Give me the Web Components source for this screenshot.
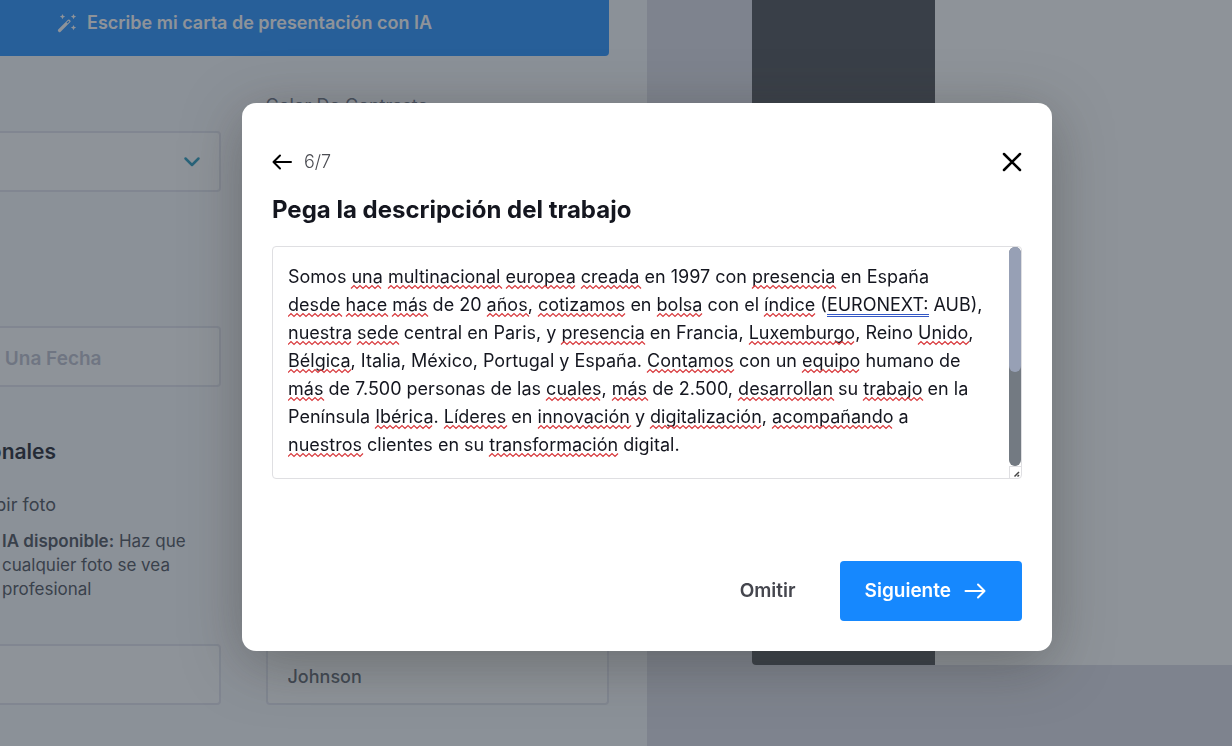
<!DOCTYPE html>
<html lang="es">
<head>
<meta charset="utf-8">
<title>Carta de presentación</title>
<style>
  html, body { margin: 0; height: 100%; }
  body { font-family: Inter, "Open Sans", sans-serif; color: #14161f; overflow: hidden; }
</style>
</head>
<body>
<letter-editor></letter-editor>
<step-dialog step="6/7" heading="Pega la descripción del trabajo">
  <spell-textarea label="Pega la descripción del trabajo"></spell-textarea>
</step-dialog>

<script>
class FormField extends HTMLElement {
  connectedCallback() {
    const type = this.getAttribute('type') || 'text';
    const label = this.getAttribute('label') || '';
    const control = type === 'select'
      ? `<select id="control"><option></option></select>
         <svg viewBox="0 0 18 12" width="18" height="12"><path d="M2.500 2.500l6.500 6.500 6.500-6.500"/></svg>`
      : `<input id="control" value="${this.getAttribute('value') || ''}" placeholder="${this.getAttribute('placeholder') || ''}">`;
    this.attachShadow({ mode: 'open' });
    this.shadowRoot.innerHTML = `
      <style>
        :host { display: block; }
        label { display: block; height: 24px; margin-bottom: 13px; font-size: 18px; line-height: 24px; color: #5e6577; }
        .box { display: grid; align-items: center; }
        input, select {
          grid-area: 1 / 1;
          box-sizing: border-box;
          width: 100%;
          height: 61px;
          padding: 4px 20px 0;
          border: 2px solid #e1e2ec;
          border-radius: 4px;
          background: #fff;
          color: #4f555f;
          font: 500 18px/24px Inter, "Open Sans", sans-serif;
          appearance: none;
        }
        input::placeholder { color: #b9bccb; font-size: 19px; font-weight: 600; opacity: 1; }
        svg { grid-area: 1 / 1; justify-self: end; margin-right: 20px; fill: none; stroke: #1a94b8; stroke-width: 2.5; stroke-linecap: round; stroke-linejoin: round; }
      </style>
      <label for="control">${label}</label>
      <div class="box">${control}</div>
    `;
  }
}
customElements.define('form-field', FormField);

class PhotoUpload extends HTMLElement {
  connectedCallback() {
    this.attachShadow({ mode: 'open' });
    this.shadowRoot.innerHTML = `
      <style>
        :host { display: block; color: #3f444f; }
        .title { width: 179px; margin: 0; font-size: 18px; line-height: 26px; text-align: right; }
        .note { width: 190px; margin: 11px 0 0 125px; font-size: 17px; line-height: 24px; }
        b { font-weight: 600; }
      </style>
      <p class="title">Subir foto</p>
      <p class="note"><b>IA disponible:</b> Haz que cualquier foto se vea profesional</p>
    `;
  }
}
customElements.define('photo-upload', PhotoUpload);

class LetterEditor extends HTMLElement {
  connectedCallback() {
    this.attachShadow({ mode: 'open' });
    this.shadowRoot.innerHTML = `
      <style>
        :host { display: flex; height: 100vh; overflow: hidden; background: #dbdbe5; }
        .form {
          box-sizing: border-box;
          flex: 0 0 53%;
          max-width: 647px;
          padding-right: 38px;
          overflow: hidden;
          background: #f9fafd;
        }
        /* the form runs past the left edge of the window */
        .content { margin-left: -123px; }
        .ai {
          display: flex;
          align-items: center;
          gap: 10px;
          width: 100%;
          height: 66px;
          margin: -10px 0 0;
          padding: 0 0 0 180px;
          border: 0;
          border-radius: 4px;
          background: #1688fe;
          color: #fff;
          font: 600 18px/24px Inter, "Open Sans", sans-serif;
        }
        .row { display: grid; grid-template-columns: 1fr 1fr; gap: 45px; }
        .first { margin-top: 38px; }
        .second { margin-top: 97px; }
        h2 { width: 179px; margin: 49px 0 0; font-size: 21px; font-weight: 600; line-height: 32px; text-align: right; color: #10141f; }
        photo-upload { margin-top: 24px; }
        .third { margin-top: 6px; }
        .preview { flex: 1; padding-left: 105px; overflow: hidden; }
        .sheet { display: flex; height: 665px; background: #fff; border-radius: 0 0 0 4px; overflow: hidden; }
        .side { width: 183px; background: #3f4147; }
      </style>
      <section class="form">
        <div class="content">
          <button class="ai" type="button">
            <svg viewBox="0 0 20 20" width="20" height="20" fill="#fff">
              <path d="M1.2 16.6L11 6.8a1.1 1.1 0 0 1 1.6 0l.7.7a1.1 1.1 0 0 1 0 1.6L3.4 18.9a1.2 1.2 0 0 1-1.7 0l-.5-.6a1.2 1.2 0 0 1 0-1.7z"/>
              <path d="M9.6 9.6l1.9-1.9.9.9-1.9 1.9z" fill="#1688fe"/>
              <path d="M5.500 1l.8 1.8 1.8.8-1.8.8-.8 1.8-.8-1.8-1.8-.8 1.8-.8zM16.500 1l.8 1.8 1.8.8-1.8.8-.8 1.8-.8-1.8-1.8-.8 1.8-.8zM16.500 12l.8 1.8 1.8.8-1.8.8-.8 1.8-.8-1.8-1.8-.8 1.8-.8z"/>
            </svg>
            Escribe mi carta de presentación con IA
          </button>
          <div class="row first">
            <form-field type="select"></form-field>
            <form-field type="select" label="Color De Contraste"></form-field>
          </div>
          <div class="row second">
            <form-field placeholder="Selecciona Una Fecha"></form-field>
            <form-field></form-field>
          </div>
          <h2>Personales</h2>
          <photo-upload></photo-upload>
          <div class="row third">
            <form-field></form-field>
            <form-field value="Johnson"></form-field>
          </div>
        </div>
      </section>
      <section class="preview">
        <div class="sheet"><div class="side"></div></div>
      </section>
    `;
  }
}
customElements.define('letter-editor', LetterEditor);

class StepDialog extends HTMLElement {
  connectedCallback() {
    this.attachShadow({ mode: 'open' });
    this.shadowRoot.innerHTML = `
      <style>
        :host {
          position: fixed;
          inset: 0;
          display: flex;
          align-items: center;
          justify-content: center;
          padding: 8px 62px 0 124px;
          background: rgba(53, 62, 73, .56);
        }
        .card {
          box-sizing: border-box;
          width: 100%;
          max-width: 810px;
          padding: 43px 30px 30px;
          border-radius: 14px;
          background: #fff;
          box-shadow: 0 12px 60px rgba(50, 50, 45, .38);
        }
        header { display: flex; align-items: center; gap: 12px; height: 32px; }
        button { border: 0; background: none; padding: 0; font: 600 19px/28px Inter, "Open Sans", sans-serif; color: #45464e; }
        .icon { display: flex; }
        .step { flex: 1; font-size: 18px; line-height: 24px; color: #4c4d53; font-weight: 300; }
        h1 { margin: 15px 0 19px; font-size: 24px; line-height: 34px; font-weight: 700; color: #14161f; }
        svg { fill: none; stroke: #000; stroke-width: 2; stroke-linecap: round; stroke-linejoin: round; }
        .close { stroke-width: 2.5; }
        footer { display: flex; justify-content: flex-end; align-items: center; gap: 44px; margin-top: 82px; }
        .next { display: flex; align-items: center; gap: 13px; height: 60px; padding: 0 36px 0 25px; border-radius: 4px; background: #1688fe; color: #fff; }
        .next svg { stroke: #fff; }
      </style>
      <div class="card" role="dialog" aria-modal="true" aria-labelledby="heading">
        <header>
          <button class="icon" type="button" aria-label="Atrás">
            <svg viewBox="0 0 20 16" width="20" height="16"><path d="M19 8H1.500M8 1.500L1.500 8 8 14.500"/></svg>
          </button>
          <span class="step">${this.getAttribute('step')}</span>
          <button class="icon" type="button" aria-label="Cerrar">
            <svg class="close" viewBox="0 0 20 20" width="20" height="20"><path d="M2 2l16 16M18 2L2 18"/></svg>
          </button>
        </header>
        <h1 id="heading">${this.getAttribute('heading')}</h1>
        <slot></slot>
        <footer>
          <button type="button">Omitir</button>
          <button class="next" type="button">Siguiente
            <svg viewBox="0 0 22 16" width="22" height="16"><path d="M1.500 8h19M14 1.500L20.500 8 14 14.500"/></svg>
          </button>
        </footer>
      </div>
    `;
  }
}
customElements.define('step-dialog', StepDialog);

// [word] is a spelling mark, {word} is a grammar mark
const DESCRIPTION = `Somos [una] [multinacional] [europea] [creada] en 1997 con [presencia] en España
[desde] [hace] [más] de 20 [años], [cotizamos] en [bolsa] con el [índice] ({EURONEXT:} AUB),
[nuestra] [sede] central en Paris, y [presencia] en Francia, [Luxemburgo], Reino [Unido],
[Bélgica], Italia, México, Portugal y España. [Contamos] con un [equipo] humano de
[más] de 7.500 personas de las [cuales], [más] de 2.500, [desarrollan] su [trabajo] en la
Península [Ibérica]. [Líderes] en [innovación] y [digitalización], [acompañando] a
[nuestros] clientes en su [transformación] digital.`;

const TEXT_FONT = '400 18px Inter, "Open Sans", sans-serif';
const LINE_HEIGHT = 28;

const strip = (text) => text.replace(/[[\]{}]/g, '');

function drawMarks() {
  const ctx = document.createElement('canvas').getContext('2d');
  ctx.font = TEXT_FONT;
  const width = (text) => ctx.measureText(strip(text)).width;
  let wavy = '';
  let straight = '';
  DESCRIPTION.split('\n').forEach((line, row) => {
    for (const match of line.matchAll(/[[{](.+?)[\]}]/g)) {
      const start = Math.round(width(line.slice(0, match.index)));
      const end = start + Math.round(width(match[1]));
      const y = row * LINE_HEIGHT + 24;
      if (match[0][0] === '{') {
        straight += `M${start} ${y - 0.5}H${end}M${start} ${y + 1.5}H${end}`;
        continue;
      }
      wavy += `M${start} ${y + 1.5}`;
      for (let x = start + 3, up = true; x <= end + 1; x += 3, up = !up) {
        wavy += `L${x} ${up ? y - 1.5 : y + 1.5}`;
      }
    }
  });
  return `<path d="${wavy}" stroke="#d8393c"/><path d="${straight}" stroke="#3357c5" stroke-width="1"/>`;
}

class SpellTextarea extends HTMLElement {
  connectedCallback() {
    this.attachShadow({ mode: 'open' });
    this.shadowRoot.innerHTML = `
      <style>
        :host { display: flex; height: 231px; border: 1px solid #dfdfe2; border-radius: 4px; overflow: hidden; }
        .text { flex: 1; min-width: 0; display: grid; }
        textarea, .marks { grid-area: 1 / 1; }
        textarea {
          box-sizing: border-box;
          width: 100%;
          height: 231px;
          margin: 0;
          padding: 16px 15px;
          border: 0;
          outline: 0;
          font: ${TEXT_FONT};
          line-height: ${LINE_HEIGHT}px;
          white-space: pre;
          color: #14161f;
          background: none;
          resize: none;
          overflow: auto;
          scrollbar-width: none;
        }
        .marks { width: 100%; height: 200px; margin: 16px 0 0 15px; fill: none; stroke-width: 1.2; pointer-events: none; }
        .bar { display: flex; flex-direction: column; width: 12px; }
        .track { flex: 1; border-radius: 6px; background: #737a82; }
        .thumb { height: 125px; border-radius: 6px; background: #97a0b5; }
        .grip { display: block; width: 12px; height: 12px; box-sizing: border-box; border: 1px solid #dfdfe2; border-width: 1px 0 0 1px; }
      </style>
      <div class="text">
        <textarea spellcheck="false" aria-label="${this.getAttribute('label')}">${strip(DESCRIPTION)}</textarea>
        <svg class="marks" aria-hidden="true">${drawMarks()}</svg>
      </div>
      <div class="bar">
        <div class="track"><div class="thumb"></div></div>
        <svg class="grip" viewBox="0 0 11 11"><path d="M4.500 9.500L9 5M7.500 9.500L9 8" fill="none" stroke="#444" stroke-width="1.500"/></svg>
      </div>
    `;
  }
}
customElements.define('spell-textarea', SpellTextarea);
</script>
</body>
</html>
